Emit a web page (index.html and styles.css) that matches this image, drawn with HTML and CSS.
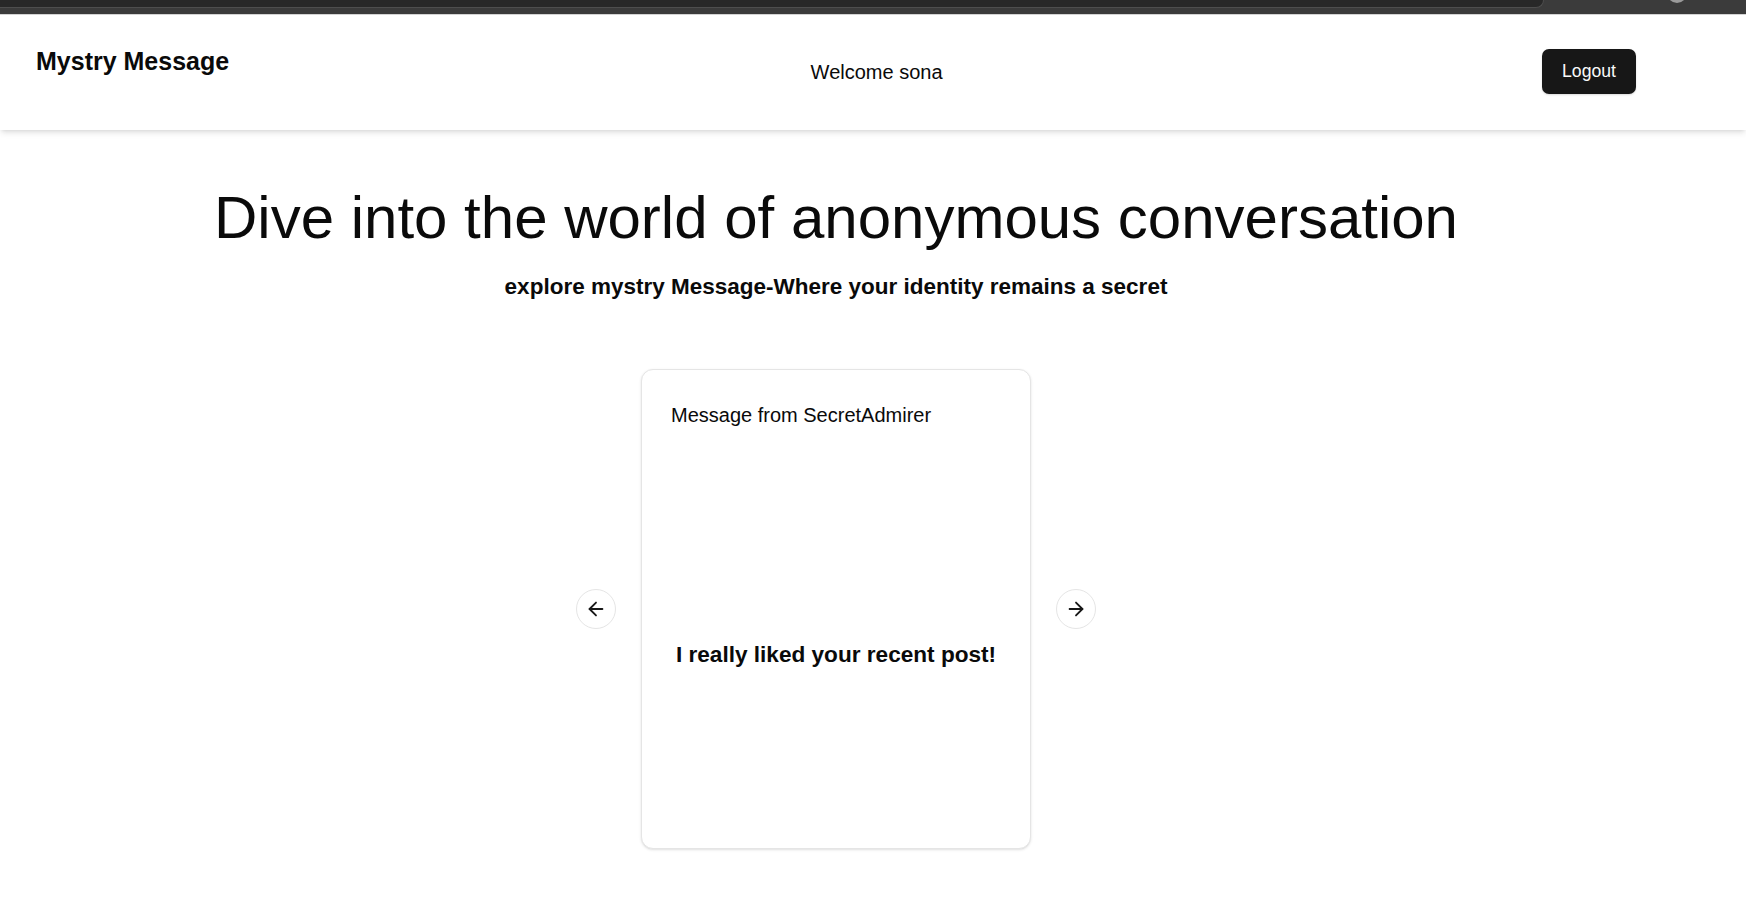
FILE: index.html
```html
<!DOCTYPE html>
<html lang="en">
<head>
<meta charset="utf-8">
<title>Mystry Message</title>
<link rel="stylesheet" href="styles.css">
</head>
<body>
<div class="chrome">
  <div class="chrome-tab"></div>
  <div class="chrome-dot"></div>
</div>
<header class="nav">
  <a class="logo" href="#">Mystry Message</a>
  <span class="welcome">Welcome sona</span>
  <button class="logout">Logout</button>
</header>
<main class="main">
  <h1 class="title">Dive into the world of anonymous conversation</h1>
  <p class="subtitle">explore mystry Message-Where your identity remains a secret</p>
  <div class="carousel">
    <button class="nav-btn" aria-label="Previous slide">
      <svg width="22" height="22" viewBox="0 0 24 24" fill="none" stroke="currentColor" stroke-width="2" stroke-linecap="round" stroke-linejoin="round"><path d="m12 19-7-7 7-7"/><path d="M19 12H5"/></svg>
    </button>
    <div class="card">
      <div class="card-head">Message from SecretAdmirer</div>
      <div class="card-body"><span class="card-text">I really liked your recent post!</span></div>
    </div>
    <button class="nav-btn" aria-label="Next slide">
      <svg width="22" height="22" viewBox="0 0 24 24" fill="none" stroke="currentColor" stroke-width="2" stroke-linecap="round" stroke-linejoin="round"><path d="M5 12h14"/><path d="m12 5 7 7-7 7"/></svg>
    </button>
  </div>
</main>
</body>
</html>
```
FILE: styles.css
```css
* { box-sizing: border-box; }
html, body { margin: 0; padding: 0; background: #ffffff; }
body {
  font-family: "Liberation Sans", Arial, Helvetica, sans-serif;
  color: #0a0a0a;
  min-height: 918px;
  overflow: hidden;
}
.chrome {
  height: 15px;
  background: #3b3b3b;
  border-bottom: 1px solid #d4d4d4;
  display: flex;
  align-items: flex-start;
  overflow: hidden;
}
.chrome-tab {
  width: 1544px;
  height: 8px;
  background: #282828;
  border-bottom: 1px solid #4e4e4e;
  border-right: 1px solid #4e4e4e;
  border-bottom-right-radius: 8px;
}
.chrome-dot {
  width: 20px;
  height: 20px;
  margin: -17px 0 0 123px;
  border-radius: 50%;
  background: #9a9a9a;
}
.nav {
  height: 115px;
  display: flex;
  align-items: center;
  justify-content: space-between;
  padding: 0 110px 2px 36px;
  background: #ffffff;
  box-shadow: 0 4px 6px -1px rgba(0,0,0,0.1), 0 2px 4px -2px rgba(0,0,0,0.1);
  position: relative;
}
.logo {
  align-self: flex-start;
  margin-top: 30px;
  font-size: 25px;
  line-height: 32px;
  font-weight: 700;
  color: #0a0a0a;
  text-decoration: none;
}
.welcome {
  font-size: 20px;
  line-height: 28px;
  margin-right: 18px;
}
.logout {
  font-family: inherit;
  font-size: 17.6px;
  line-height: 24px;
  color: #fafafa;
  background: #171717;
  border: none;
  border-radius: 7px;
  width: 94px;
  height: 45px;
  padding: 0 0 2px;
  box-shadow: 0 1px 2px rgba(0,0,0,0.15);
}
.main {
  display: flex;
  flex-direction: column;
  align-items: center;
  padding: 0 74px 0 0;
}
.title {
  margin: 58px 0 0;
  font-size: 60px;
  line-height: 60px;
  font-weight: 400;
  white-space: nowrap;
}
.subtitle {
  margin: 25px 0 0;
  font-size: 22.5px;
  line-height: 28px;
  font-weight: 700;
}
.carousel {
  margin-top: 68px;
  display: flex;
  align-items: center;
  gap: 25px;
}
.nav-btn {
  width: 40px;
  height: 40px;
  border-radius: 50%;
  border: 1px solid #e5e5e5;
  background: #ffffff;
  color: #171717;
  display: flex;
  align-items: center;
  justify-content: center;
  padding: 0;
}
.card {
  width: 390px;
  height: 480px;
  border: 1px solid #e5e5e5;
  border-radius: 12px;
  background: #ffffff;
  box-shadow: 0 1px 3px rgba(0,0,0,0.1), 0 1px 2px -1px rgba(0,0,0,0.1);
  display: flex;
  flex-direction: column;
}
.card-head {
  padding: 31px 27px 0 29px;
  font-size: 20px;
  line-height: 28px;
}
.card-body {
  flex: 1;
  display: flex;
  align-items: center;
  justify-content: center;
  padding: 32px 20px 0;
}
.card-text {
  font-size: 22.6px;
  line-height: 28px;
  font-weight: 700;
  text-align: center;
}
```
